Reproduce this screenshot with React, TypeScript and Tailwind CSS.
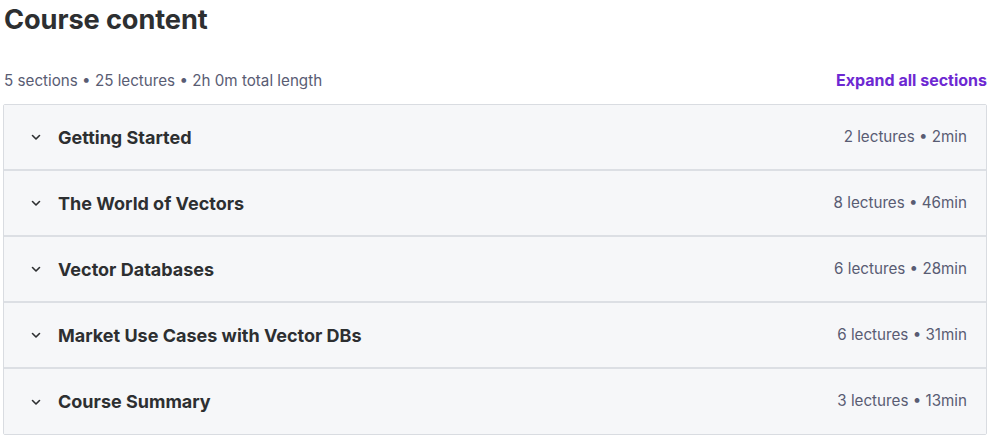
import React from "react";

const sections = [
  { title: "Getting Started", meta: "2 lectures • 2min" },
  { title: "The World of Vectors", meta: "8 lectures • 46min" },
  { title: "Vector Databases", meta: "6 lectures • 28min" },
  { title: "Market Use Cases with Vector DBs", meta: "6 lectures • 31min" },
  { title: "Course Summary", meta: "3 lectures • 13min" },
];

function Chevron() {
  return (
    <svg width="12" height="12" viewBox="0 0 12 12" fill="none" className="text-[#2d2f31]">
      <path d="M2.5 4.5 L6 8 L9.5 4.5" stroke="currentColor" strokeWidth="1.6" strokeLinecap="round" strokeLinejoin="round" />
    </svg>
  );
}

export default function App() {
  return (
    <div className="w-[993px] h-[441px] bg-white pl-[4px] pr-[6px] text-[#2d2f31] overflow-hidden" style={{ fontFamily: "Inter, 'Noto Sans', sans-serif" }}>
      <h2 className="text-[27.2px] leading-[40px] font-bold tracking-[-0.1px]">Course content</h2>
      <div className="flex items-center justify-between mt-[20px] h-[40px]">
        <span className="text-[15.2px] text-[#595c73] translate-y-[1px]">5 sections • 25 lectures • 2h 0m total length</span>
        <span className="text-[16px] font-bold text-[#6d28d2]">Expand all sections</span>
      </div>
      <div className="border border-[#d9dce1] -ml-[1px] mt-[4px] rounded-[2px]">
        {sections.map((s, i) => (
          <div
            key={s.title}
            className={`flex items-center justify-between bg-[#f6f7f9] pl-[26px] pr-[19px] ${i < sections.length - 1 ? "h-[66px] border-b-2 border-[#dcdfe4]" : "h-[65px]"}`}
          >
            <div className="flex items-center gap-[16px]">
              <Chevron />
              <span className="text-[18px] font-bold">{s.title}</span>
            </div>
            <span className="text-[15.2px] text-[#595c73]">{s.meta}</span>
          </div>
        ))}
      </div>
    </div>
  );
}
